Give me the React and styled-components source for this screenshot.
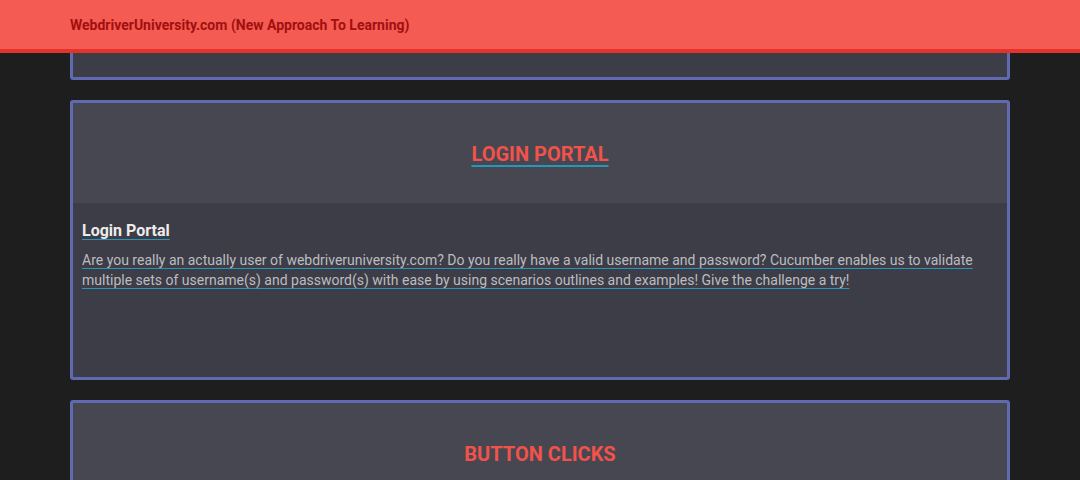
import React from 'react';
import styled, { createGlobalStyle } from 'styled-components';

const GlobalStyle = createGlobalStyle`
    body {
        margin: 0;
        background: #1e1e1e;
        font-family: Roboto, "Liberation Sans", sans-serif;
        overflow: hidden;
    }
`;

const TopBar = styled.header`
    position: fixed;
    top: 0;
    left: 0;
    right: 0;
    height: 49px;
    background: #f45b52;
    border-bottom: 4px solid #e5332b;
    display: flex;
    align-items: center;
    padding-left: 70px;
    z-index: 10;
`;

const Brand = styled.a`
    color: #a20f0f;
    font-size: 14px;
    font-weight: 700;
    text-decoration: none;
`;

const Main = styled.main`
    margin-top: -200px;
    padding: 0 70px;
    display: flex;
    flex-direction: column;
    gap: 20px;
`;

const Card = styled.section`
    height: 280px;
    box-sizing: border-box;
    border: 3px solid #5f6ab1;
    border-radius: 3px;
    background: #3d3d47;
    display: flex;
    flex-direction: column;
    overflow: hidden;
`;

const CardHead = styled.div`
    height: 100px;
    box-sizing: border-box;
    padding-top: 2px;
    flex-shrink: 0;
    background: #474751;
    display: flex;
    align-items: center;
    justify-content: center;
`;

const CardTitle = styled.h2`
    margin: 0;
    font-size: 20px;
    font-weight: 700;
    color: #f2524a;
    text-decoration: ${p => (p.$active ? 'underline' : 'none')};
    text-decoration-color: #2a95b8;
    text-decoration-thickness: 2px;
    text-underline-offset: 4px;
`;

const CardBody = styled.div`
    padding: 18px 9px;
`;

const BodyTitle = styled.h3`
    margin: 0 0 10px;
    font-size: 16px;
    font-weight: 700;
    color: #ececec;
    text-decoration: underline;
    text-decoration-color: #2a95b8;
    text-underline-offset: 3px;
`;

const BodyText = styled.p`
    margin: 0;
    font-size: 14px;
    line-height: 20px;
    color: #bcbcc0;
    text-decoration: underline;
    text-decoration-color: #2a95b8;
    text-underline-offset: 3px;
`;

const cards = [
    { title: 'CONTACT US', heading: 'Contact Us Form', text: '' },
    {
        title: 'LOGIN PORTAL',
        heading: 'Login Portal',
        text: 'Are you really an actually user of webdriveruniversity.com? Do you really have a valid username and password? Cucumber enables us to validate multiple sets of username(s) and password(s) with ease by using scenarios outlines and examples! Give the challenge a try!',
        active: true,
    },
    { title: 'BUTTON CLICKS', heading: 'Button Clicks', text: '' },
];

const App = () => {
    return (
        <>
            <GlobalStyle />
            <TopBar>
                <Brand href="#">WebdriverUniversity.com (New Approach To Learning)</Brand>
            </TopBar>
            <Main>
                {cards.map(card => (
                    <Card key={card.title}>
                        <CardHead>
                            <CardTitle $active={card.active}>{card.title}</CardTitle>
                        </CardHead>
                        <CardBody>
                            <BodyTitle>{card.heading}</BodyTitle>
                            <BodyText>{card.text}</BodyText>
                        </CardBody>
                    </Card>
                ))}
            </Main>
        </>
    );
};

export default App;
